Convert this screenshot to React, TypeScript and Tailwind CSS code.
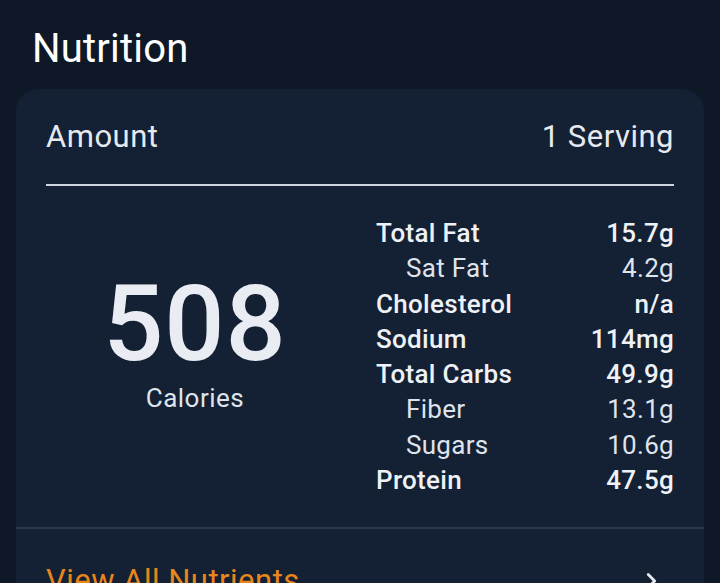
import React from 'react';

const rows = [
  { label: 'Total Fat', value: '15.7g', main: true },
  { label: 'Sat Fat', value: '4.2g', main: false },
  { label: 'Cholesterol', value: 'n/a', main: true },
  { label: 'Sodium', value: '114mg', main: true },
  { label: 'Total Carbs', value: '49.9g', main: true },
  { label: 'Fiber', value: '13.1g', main: false },
  { label: 'Sugars', value: '10.6g', main: false },
  { label: 'Protein', value: '47.5g', main: true },
];

export default function App() {
  return (
    <div
      className="h-[583px] w-[720px] overflow-hidden bg-[#0e1827] text-[#e8ecf2]"
      style={{ fontFamily: 'Roboto, "Noto Sans", sans-serif' }}
    >
      <h1 className="px-8 pt-[25px] text-[40px] leading-[48px] tracking-[0.2px] text-white">Nutrition</h1>

      <div className="mx-4 mt-[16px] rounded-[22px] bg-[#142033]">
        <div className="px-[30px]">
          <div className="flex items-center justify-between pt-[30px] pb-[29px] text-[31px] leading-[36px] tracking-[0.5px] text-[#e6eaf0]">
            <span>Amount</span>
            <span>1 Serving</span>
          </div>
          <div className="h-[2px] bg-[#cdd5df]" />

          <div className="grid grid-cols-2 gap-8 pt-[30px] pb-[29px]">
            <div className="flex flex-col items-center justify-center pb-[30px]">
              <span className="text-[106px] font-medium leading-[106px] tracking-[1px] text-[#e9edf3]">508</span>
              <span className="mt-[6px] text-[26px] leading-[30px] tracking-[0.5px] text-[#dfe4ec]">Calories</span>
            </div>
            <div className="flex flex-col">
              {rows.map((r) => (
                <div
                  key={r.label}
                  className={`flex items-center justify-between text-[26px] leading-[35.3px] tracking-[0.3px] ${
                    r.main ? 'font-medium text-[#eef1f5]' : 'pl-[30px] text-[#dfe4ec]'
                  }`}
                >
                  <span>{r.label}</span>
                  <span>{r.value}</span>
                </div>
              ))}
            </div>
          </div>
        </div>

        <div className="h-[2px] bg-[#29384a]" />

        <div className="flex items-center justify-between px-[30px] pt-[34px] pb-[30px]">
          <span className="text-[31px] leading-[36px] tracking-[0.5px] text-[#e8861c]">View All Nutrients</span>
          <svg width="22" height="22" viewBox="0 0 24 24" fill="none" stroke="#e8ecf2" strokeWidth="3" strokeLinecap="round" strokeLinejoin="round" className="mr-[12px]">
            <path d="M9 5l7 7-7 7" />
          </svg>
        </div>
      </div>
    </div>
  );
}
